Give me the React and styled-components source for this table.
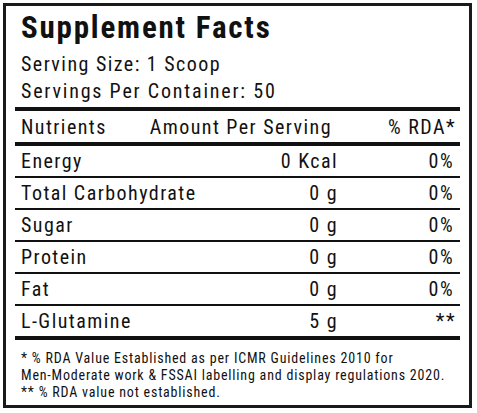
import React from 'react'
import styled, { createGlobalStyle } from 'styled-components'

const GlobalStyle = createGlobalStyle`
  html, body {
    margin: 0;
    padding: 0;
    background: #fff;
  }
  body {
    font-family: "Roboto Condensed", "Liberation Sans Narrow", "Arial Narrow", "DejaVu Sans Condensed", sans-serif;
    color: #111;
  }
`

const Page = styled.div`
  width: 477px;
  height: 413px;
  padding: 3px 5px 5px 3px;
  box-sizing: border-box;
`

const Label = styled.div`
  width: 469px;
  height: 405px;
  box-sizing: border-box;
  border: 3px solid #1a1a1a;
  padding: 0 9px;
  display: flex;
  flex-direction: column;
`

const Title = styled.h1`
  margin: 0;
  height: 45px;
  padding-left: 6px;
  font-size: 31px;
  line-height: 44px;
  font-weight: 700;
  letter-spacing: 1.8px;
`

const InfoLine = styled.div`
  padding-left: 6px;
  height: 27px;
  font-size: 20px;
  line-height: 27px;
  letter-spacing: ${p => p.$ls || 1.45}px;
`

const Rule = styled.div`
  height: ${p => p.$thick ? '4px' : '2px'};
  margin-top: ${p => p.$mt || 0}px;
  background: #111;
  flex: 0 0 auto;
`

const Row = styled.div`
  display: grid;
  grid-template-columns: minmax(0, 1fr) 200px 118px;
  align-items: center;
  height: ${p => p.$h || 30}px;
  padding: 0 4px 0 6px;
  font-size: 20px;
  line-height: 22px;
  letter-spacing: 1.45px;
`

const Cell = styled.div`
  text-align: ${p => p.$align || 'left'};
  padding-right: ${p => p.$pr || 0}px;
  white-space: nowrap;
`

const Notes = styled.div`
  padding: 10px 0 0 6px;
  font-size: 14px;
  line-height: 17px;
  letter-spacing: 0.8px;
`

const nutrients = [
  { name: 'Energy', amount: '0 Kcal', rda: '0%' },
  { name: 'Total Carbohydrate', amount: '0 g', rda: '0%' },
  { name: 'Sugar', amount: '0 g', rda: '0%' },
  { name: 'Protein', amount: '0 g', rda: '0%' },
  { name: 'Fat', amount: '0 g', rda: '0%' },
  { name: 'L-Glutamine', amount: '5 g', rda: '**' },
]

const App = () => {
  return (
    <Page>
      <GlobalStyle />
      <Label>
        <Title>Supplement Facts</Title>
        <InfoLine>Serving Size: 1 Scoop</InfoLine>
        <InfoLine $ls={1.8}>Servings Per Container: 50</InfoLine>
        <Rule $thick $mt={2} />
        <Row $h={31}>
          <Cell>Nutrients</Cell>
          <Cell $align="right" $pr={6}>Amount Per Serving</Cell>
          <Cell $align="right">% RDA*</Cell>
        </Row>
        <Rule $thick />
        {nutrients.map((n, i) => (
          <React.Fragment key={n.name}>
            {i > 0 && <Rule />}
            <Row>
              <Cell>{n.name}</Cell>
              <Cell $align="right">{n.amount}</Cell>
              <Cell $align="right" $pr={n.rda === '**' ? 0 : 2}>{n.rda}</Cell>
            </Row>
          </React.Fragment>
        ))}
        <Rule $thick />
        <Notes>
          * % RDA Value Established as per ICMR Guidelines 2010 for<br />
          Men-Moderate work &amp; FSSAI labelling and display regulations 2020.<br />
          ** % RDA value not established.
        </Notes>
      </Label>
    </Page>
  )
}

export default App
